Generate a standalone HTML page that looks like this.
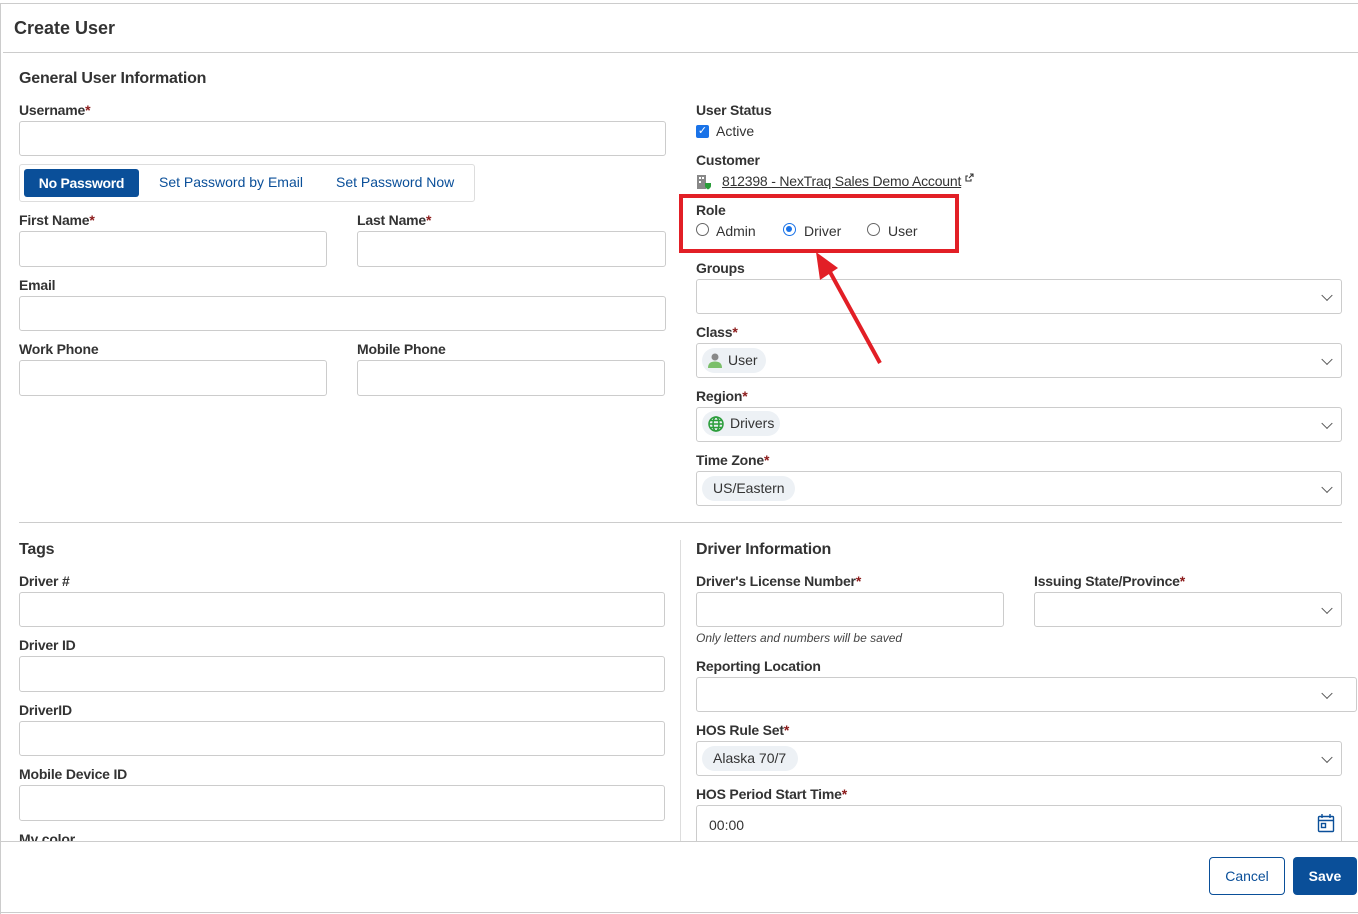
<!DOCTYPE html>
<html><head><meta charset="utf-8"><style>
*{box-sizing:border-box;margin:0;padding:0}
html{overflow:hidden;width:1358px;height:914px}
body{width:1358px;height:914px;background:#fff;font-family:"Liberation Sans",sans-serif;color:#333;position:relative;overflow:hidden}
.a{position:absolute}
.l{position:absolute;font-size:14px;line-height:16px;color:#333;font-weight:bold;letter-spacing:-0.2px}
.l i{color:#8b1a1a;font-style:normal}
.in{position:absolute;border:1px solid #ccc;border-radius:3px;background:#fff}
.chev{position:absolute;right:10px;top:50%;width:8px;height:8px;border-right:1.3px solid #555;border-bottom:1.3px solid #555;transform:translateY(-70%) rotate(45deg)}
.pill{position:absolute;left:5px;top:4px;height:25px;border-radius:13px;background:#edf1f5;font-size:14px;line-height:25px;padding:0 11px;color:#333}
.t{position:absolute;font-size:14px;line-height:16px;color:#333}
.rad{position:absolute;width:13px;height:13px;border:1px solid #666;border-radius:50%}
</style></head><body>
<div class="a" style="left:0;top:3px;width:1358px;height:1px;background:#ccc"></div>
<div class="a" style="left:0;top:3px;width:1px;height:911px;background:#ccc"></div>
<div class="a" style="left:14px;top:18px;font-size:18px;font-weight:bold;color:#333">Create User</div>
<div class="a" style="left:3px;top:52px;width:1355px;height:1px;background:#ccc"></div>

<div class="a" style="left:0;top:53px;width:1358px;height:788px;overflow:hidden">
<div class="a" style="left:0;top:-53px;width:1358px;height:900px">
<div class="a" style="left:19px;top:70px;font-size:16px;color:#333;font-weight:bold;letter-spacing:-0.2px">General User Information</div>
<div class="l" style="left:19px;top:102px">Username<i>*</i></div>
<div class="in" style="left:19px;top:121px;width:647px;height:35px"></div>
<div class="in" style="left:19px;top:164px;width:456px;height:38px;border-color:#ddd"></div>
<div class="a" style="left:24px;top:169px;width:115px;height:28px;background:#0a4f99;border-radius:3px;color:#fff;font-size:14px;font-weight:bold;line-height:28px;text-align:center;letter-spacing:-0.3px">No Password</div>
<div class="t" style="left:159px;top:174px;color:#0a4f99">Set Password by Email</div>
<div class="t" style="left:336px;top:174px;color:#0a4f99">Set Password Now</div>
<div class="l" style="left:19px;top:212px">First Name<i>*</i></div>
<div class="l" style="left:357px;top:212px">Last Name<i>*</i></div>
<div class="in" style="left:19px;top:231px;width:308px;height:36px"></div>
<div class="in" style="left:357px;top:231px;width:309px;height:36px"></div>
<div class="l" style="left:19px;top:277px">Email</div>
<div class="in" style="left:19px;top:296px;width:647px;height:35px"></div>
<div class="l" style="left:19px;top:341px">Work Phone</div>
<div class="l" style="left:357px;top:341px">Mobile Phone</div>
<div class="in" style="left:19px;top:360px;width:308px;height:36px"></div>
<div class="in" style="left:357px;top:360px;width:308px;height:36px"></div>

<div class="l" style="left:696px;top:102px">User Status</div>
<div class="a" style="left:696px;top:125px;width:13px;height:13px;background:#1a73e8;border-radius:2px;color:#fff;font-size:11px;line-height:13px;text-align:center">✓</div>
<div class="t" style="left:716px;top:123px">Active</div>
<div class="l" style="left:696px;top:152px">Customer</div>
<svg class="a" style="left:696px;top:174px" width="16" height="16" viewBox="0 0 16 16"><rect x="1" y="1" width="9" height="14" fill="#888"/><rect x="3" y="3" width="2" height="2" fill="#fff"/><rect x="6" y="3" width="2" height="2" fill="#fff"/><rect x="3" y="7" width="2" height="2" fill="#fff"/><path d="M9 9h6v3c0 2-3 3.5-3 3.5S9 14 9 12z" fill="#2a9d3a"/></svg>
<div class="t" style="left:722px;top:173px;letter-spacing:-0.2px"><span style="text-decoration:underline">812398 - NexTraq Sales Demo Account</span> <svg width="9" height="9" viewBox="0 0 9 9" fill="none" stroke="#333" stroke-width="1.1" style="vertical-align:4px"><path d="M5 1h3v3M8 1L4 5M6 6v2H1V3h2"/></svg></div>
<div class="l" style="left:696px;top:202px">Role</div>
<div class="rad" style="left:696px;top:223px"></div>
<div class="t" style="left:716px;top:223px">Admin</div>
<div class="rad" style="left:783px;top:223px;border:1.5px solid #1a73e8"><div class="a" style="left:2px;top:2px;width:6px;height:6px;border-radius:50%;background:#1a73e8"></div></div>
<div class="t" style="left:804px;top:223px">Driver</div>
<div class="rad" style="left:867px;top:223px"></div>
<div class="t" style="left:888px;top:223px">User</div>
<div class="a" style="left:679px;top:194px;width:280px;height:59px;border:4px solid #e21f26"></div>

<div class="l" style="left:696px;top:260px">Groups</div>
<div class="in" style="left:696px;top:279px;width:646px;height:35px"><div class="chev"></div></div>
<div class="l" style="left:696px;top:324px">Class<i>*</i></div>
<div class="in" style="left:696px;top:343px;width:646px;height:35px"><div class="pill" style="padding-left:26px;padding-right:8px">User<svg class="a" style="left:6px;top:5px" width="14" height="16" viewBox="0 0 14 16"><circle cx="7" cy="4" r="3.5" fill="#888"/><path d="M0 15c0-5 3-6.5 7-6.5s7 1.5 7 6.5z" fill="#7bbf6a"/></svg></div><div class="chev"></div></div>
<div class="l" style="left:696px;top:388px">Region<i>*</i></div>
<div class="in" style="left:696px;top:407px;width:646px;height:35px"><div class="pill" style="top:3px;padding-left:28px;padding-right:6px">Drivers<svg class="a" style="left:6px;top:5px" width="16" height="16" viewBox="0 0 16 16" fill="none" stroke="#2a9d3a" stroke-width="1.5"><circle cx="8" cy="8" r="7"/><ellipse cx="8" cy="8" rx="3" ry="7"/><path d="M1 8h14M2 4.5h12M2 11.5h12"/></svg></div><div class="chev"></div></div>
<div class="l" style="left:696px;top:452px">Time Zone<i>*</i></div>
<div class="in" style="left:696px;top:471px;width:646px;height:35px"><div class="pill" style="padding:0 10px 0 11px">US/Eastern</div><div class="chev"></div></div>

<div class="a" style="left:19px;top:522px;width:1323px;height:1px;background:#ccc"></div>
<div class="a" style="left:680px;top:540px;width:1px;height:310px;background:#ddd"></div>

<div class="a" style="left:19px;top:541px;font-size:16px;font-weight:bold;letter-spacing:-0.2px">Tags</div>
<div class="l" style="left:19px;top:573px">Driver #</div>
<div class="in" style="left:19px;top:592px;width:646px;height:35px"></div>
<div class="l" style="left:19px;top:637px">Driver ID</div>
<div class="in" style="left:19px;top:656px;width:646px;height:36px"></div>
<div class="l" style="left:19px;top:702px">DriverID</div>
<div class="in" style="left:19px;top:721px;width:646px;height:35px"></div>
<div class="l" style="left:19px;top:766px">Mobile Device ID</div>
<div class="in" style="left:19px;top:785px;width:646px;height:36px"></div>
<div class="l" style="left:19px;top:831px">My color</div>

<div class="a" style="left:696px;top:541px;font-size:16px;font-weight:bold;letter-spacing:-0.2px">Driver Information</div>
<div class="l" style="left:696px;top:573px">Driver's License Number<i>*</i></div>
<div class="l" style="left:1034px;top:573px">Issuing State/Province<i>*</i></div>
<div class="in" style="left:696px;top:592px;width:308px;height:35px"></div>
<div class="in" style="left:1034px;top:592px;width:308px;height:35px"><div class="chev"></div></div>
<div class="a" style="left:696px;top:631px;font-size:12px;font-style:italic;color:#444">Only letters and numbers will be saved</div>
<div class="l" style="left:696px;top:658px">Reporting Location</div>
<div class="in" style="left:696px;top:677px;width:661px;height:35px"><div class="chev" style="right:25px"></div></div>
<div class="l" style="left:696px;top:722px">HOS Rule Set<i>*</i></div>
<div class="in" style="left:696px;top:741px;width:646px;height:35px"><div class="pill" style="padding:0 12px 0 11px">Alaska 70/7</div><div class="chev"></div></div>
<div class="l" style="left:696px;top:786px">HOS Period Start Time<i>*</i></div>
<div class="in" style="left:696px;top:805px;width:646px;height:50px"><div class="t" style="left:12px;top:11px">00:00</div>
<svg class="a" style="left:620px;top:7px" width="18" height="20" viewBox="0 0 18 20" fill="none" stroke="#0a4f99" stroke-width="1.4"><rect x="1.5" y="3.5" width="15" height="15" rx="1"/><path d="M1.5 7.5h15M5 1v4M13 1v4"/><rect x="4.5" y="10.5" width="4" height="4"/></svg></div>
</div></div>

<svg class="a" style="left:0;top:0" width="1358" height="914"><line x1="880" y1="363" x2="830" y2="272" stroke="#e21f26" stroke-width="4"/><polygon points="816,252 838,268 820,280" fill="#e21f26"/></svg>

<div class="a" style="left:0;top:841px;width:1358px;height:1px;background:#ccc"></div>
<div class="a" style="left:1209px;top:857px;width:76px;height:38px;border:1px solid #0a4f99;border-radius:4px;color:#0a4f99;font-size:14px;line-height:36px;text-align:center">Cancel</div>
<div class="a" style="left:1293px;top:857px;width:64px;height:38px;background:#0a4f99;border-radius:4px;color:#fff;font-size:14px;font-weight:bold;line-height:38px;text-align:center">Save</div>
<div class="a" style="left:0;top:912px;width:1358px;height:1px;background:#ccc"></div>
</body></html>
